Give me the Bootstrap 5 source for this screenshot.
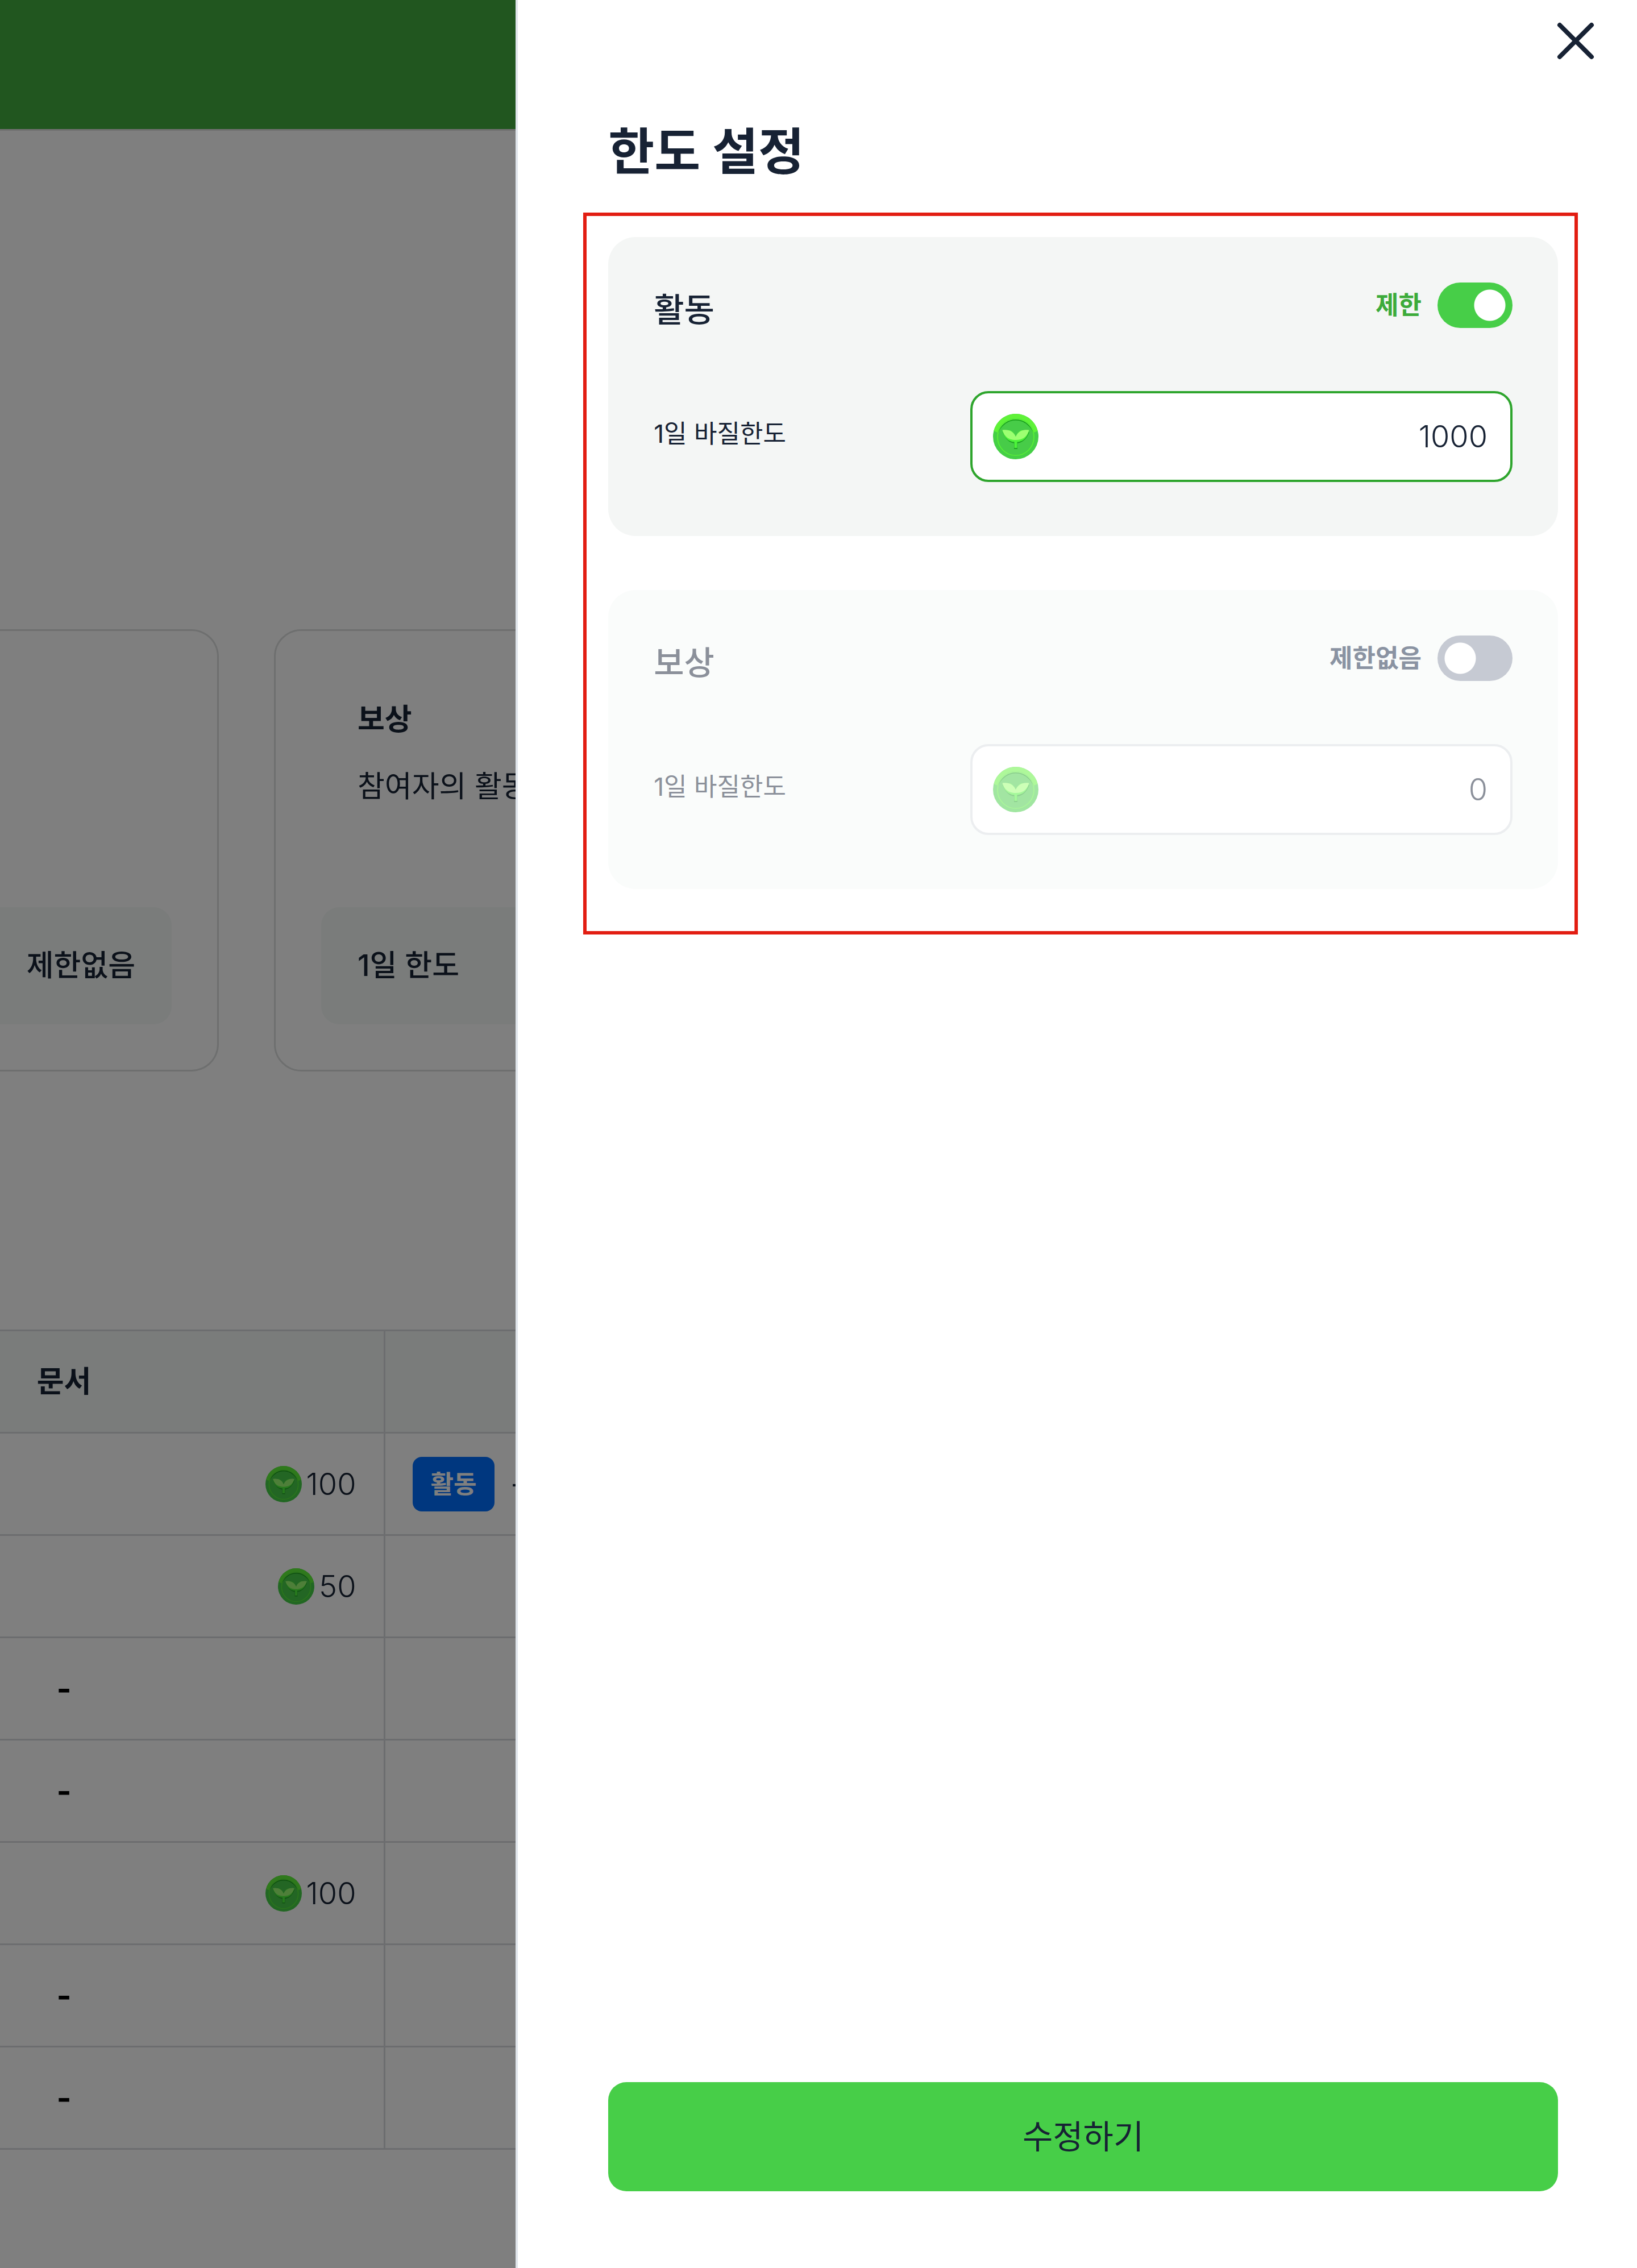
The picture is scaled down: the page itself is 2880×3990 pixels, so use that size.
<!DOCTYPE html>
<html lang="ko">
<head>
<meta charset="utf-8">
<meta name="viewport" content="width=device-width, initial-scale=1">
<title>한도 설정</title>
<link href="https://cdn.jsdelivr.net/npm/bootstrap@5.3.0/dist/css/bootstrap.min.css" rel="stylesheet">
<style>
  :root {
    --ink: #172234;
    --brand: #47ce48;
    --brand-deep: #2ea52d;
    --soft: #f4f6f5;
    --soft-page: #f4f9f7;
    --line: #d8dadf;
  }
  body {
    font-family: Inter, "Noto Sans CJK KR", sans-serif;
    font-size: 52px;
    line-height: 80px;
    color: var(--ink);
    min-height: 100vh;
    overflow-x: hidden;
  }
  .topbar { height: 230px; background: #42ac3e; border-bottom: 3px solid #e0e0e0; }
  .page-main { padding-top: 877px; }

  /* limit summary cards */
  .summary-row { gap: 97px; }
  .summary-card { border: 3px solid #dcdfdf; border-radius: 48px; padding: 80px; }
  .summary-card.first { width: 385px; border-left: 0; border-radius: 0 48px 48px 0; padding-left: 0; }
  .summary-head { padding: 36px 64px 172px; }
  .summary-head h2 { font-size: 52px; line-height: 80px; margin-bottom: 38px; }
  .summary-limit { background: var(--soft-page); border-radius: 32px; padding: 63px 64px; line-height: 80px; font-weight: 500; }
  .summary-card.first .summary-limit { border-radius: 0 32px 32px 0; padding-left: 0; }

  /* reward table */
  .reward-table { margin-top: 454px; table-layout: fixed; color: var(--ink); --bs-table-color: var(--ink); }
  .reward-table tr { height: 180px; }
  .reward-table th, .reward-table td { padding: 0; border: 0 solid var(--line); border-width: 3px 0; }
  .reward-table thead th { background: var(--soft-page); vertical-align: middle; }
  .reward-table .split { border-left-width: 3px; padding-left: 48px; }
  .reward-table .amount { padding-right: 48px; font-size: 54px; font-weight: 300; }
  .col-name { width: 225px; }
  .col-amount { width: 451px; }
  .dash { color: #000; font-size: 56px; }
  .coin-sm { width: 64px; height: 64px; }
  .tag { background: #006fff; font-size: 44px; line-height: 64px; padding: 16px 32px; border-radius: 16px; }

  /* settings drawer */
  .offcanvas.limit-drawer { --bs-offcanvas-width: 68.5vw; border-left: 4px solid #dfe4ea; color: var(--ink); transition: none; outline: 0; }
  .drawer-head { height: 144px; padding-right: 72px; }
  .drawer-close svg { width: 72px; height: 72px; }
  .drawer-title { font-size: 88px; line-height: 120px; padding: 62px 0 48px 159px; }
  .limit-frame { border: 6px solid #e21d12; margin: 0 104px 0 115px; padding: 37px 29px 74px 38px; gap: 95px; }
  .limit-box { background: var(--soft); border-radius: 48px; padding: 80px 80px 95px; }
  .limit-head { margin-bottom: 95px; }
  .limit-head h3 { font-size: 58px; line-height: 96px; }
  .limit-switch { gap: 28px; font-size: 44px; line-height: 80px; color: #3cab3a; }
  .limit-switch .form-check-input {
    appearance: none; width: 132px; height: 80px; margin: 0; border: 0; border-radius: 40px; box-shadow: none;
    background: radial-gradient(circle closest-side at 40px 40px, #fff 27px, #c6cad3 28px); transition: none;
  }
  .limit-switch .form-check-input:checked {
    background: radial-gradient(circle closest-side at 92px 40px, #fff 27px, var(--brand) 28px);
  }
  .limit-name { font-size: 44px; line-height: 150px; }
  .limit-input { width: 954px; height: 160px; border: 4px solid var(--brand-deep); border-radius: 32px; background: #fff; padding: 0 40px 0 36px; }
  .limit-input svg { width: 80px; height: 80px; }
  .limit-input .form-control { font-size: 54px; font-weight: 300; line-height: 80px; color: var(--ink); box-shadow: none; background: none; }
  .limit-box.is-off { background: #fafcfb; color: #8b909a; }
  .limit-box.is-off .limit-switch { color: #8a93a2; }
  .limit-box.is-off .limit-input { border-color: #eceef0; }
  .limit-box.is-off .limit-input svg { opacity: .5; }
  .limit-box.is-off .form-control { color: #8b909a; }
  .drawer-foot { padding: 0 139px 135px 159px; }
  .btn-save, .btn-save:hover { background: var(--brand); color: var(--ink); font-size: 58px; line-height: 80px; padding: 56px; border: 0; border-radius: 32px; }
</style>
<script src="https://cdn.jsdelivr.net/npm/bootstrap@5.3.0/dist/js/bootstrap.bundle.min.js"></script>
</head>
<body>

<svg class="d-none" aria-hidden="true">
  <symbol id="coin" viewBox="0 0 80 80">
    <circle cx="40" cy="40" r="40" fill="#45cf46"/>
    <path d="M1.300 30A40 40 0 0 1 78.700 30L72 33A33 33 0 0 0 8 33Z" fill="#5ff238"/>
    <circle cx="40" cy="41" r="32" fill="none" stroke="#58ec38" stroke-width="2"/>
    <path d="M9 34A32 32 0 0 1 71 34A32.500 30 0 0 0 9 34Z" fill="#169a1a"/>
    <circle cx="40" cy="42" r="30.500" fill="#47cc48"/>
    <path d="M17 32C22 46 30 51 37 52V62H43V52C50 51 59 46 64 32Z" fill="#1fa324"/>
    <path d="M16.500 29C20 43 28 49 37.500 49.500V60H42.500V49.500C52 49 60 43 63.500 29Z" fill="#4df33a"/>
    <path d="M16.500 28.500C28 27 36 31 40 40C44 31 52 27 63.500 28.500C60 40 53 46 40 46C27 46 20 40 16.500 28.500Z" fill="#9dff72"/>
    <path d="M17.500 28C28 26 36 30 40 40C44 30 52 26 62.500 28L60 20H20Z" fill="#47cc48"/>
  </symbol>
</svg>

<header class="topbar"></header>

<main class="page-main">
  <section class="summary-row d-flex">
    <article class="summary-card first d-flex flex-column">
      <div class="summary-limit mt-auto text-end">제한없음</div>
    </article>
    <article class="summary-card flex-grow-1">
      <div class="summary-head">
        <h2 class="fw-bold">보상</h2>
        <p class="mb-0 text-nowrap">참여자의 활동</p>
      </div>
      <div class="summary-limit">1일 한도</div>
    </article>
  </section>

  <table class="reward-table table align-middle mb-0">
    <colgroup><col class="col-name"><col class="col-amount"><col></colgroup>
    <thead>
      <tr><th class="text-center">문서</th><th></th><th class="split"></th></tr>
    </thead>
    <tbody>
      <tr>
        <td></td>
        <td class="amount"><div class="d-flex justify-content-end align-items-center gap-2"><svg class="coin-sm"><use href="#coin"/></svg>100</div></td>
        <td class="split"><div class="d-flex align-items-center"><span class="tag text-white fw-bold me-4">활동</span><span class="ms-1">-</span></div></td>
      </tr>
      <tr>
        <td></td>
        <td class="amount"><div class="d-flex justify-content-end align-items-center gap-2"><svg class="coin-sm"><use href="#coin"/></svg>50</div></td>
        <td class="split"></td>
      </tr>
      <tr><td class="dash text-center fw-bold">-</td><td></td><td class="split"></td></tr>
      <tr><td class="dash text-center fw-bold">-</td><td></td><td class="split"></td></tr>
      <tr>
        <td></td>
        <td class="amount"><div class="d-flex justify-content-end align-items-center gap-2"><svg class="coin-sm"><use href="#coin"/></svg>100</div></td>
        <td class="split"></td>
      </tr>
      <tr><td class="dash text-center fw-bold">-</td><td></td><td class="split"></td></tr>
      <tr><td class="dash text-center fw-bold">-</td><td></td><td class="split"></td></tr>
    </tbody>
  </table>
</main>

<div class="offcanvas-backdrop show"></div>

<aside class="offcanvas offcanvas-end limit-drawer show" data-bs-backdrop="false" data-bs-scroll="true" tabindex="-1" aria-labelledby="drawerTitle">
  <div class="drawer-head d-flex justify-content-end align-items-center">
    <button type="button" class="drawer-close btn p-0 border-0 d-flex" aria-label="닫기">
      <svg viewBox="0 0 72 72" fill="none" stroke="#172234" stroke-width="8" stroke-linecap="round"><path d="M8 8L64 64M64 8L8 64"/></svg>
    </button>
  </div>
  <h1 class="drawer-title fw-bold mb-0" id="drawerTitle">한도 설정</h1>

  <form class="d-flex flex-column flex-grow-1">
    <div class="limit-frame d-flex flex-column">
      <section class="limit-box">
        <div class="limit-head d-flex justify-content-between align-items-start">
          <h3 class="mb-0">활동</h3>
          <div class="limit-switch d-flex fw-bold">
            <label for="activitySwitch">제한</label>
            <input class="form-check-input" type="checkbox" role="switch" id="activitySwitch" checked>
          </div>
        </div>
        <div class="d-flex justify-content-between align-items-start">
          <label class="limit-name" for="activityLimit">1일 바질한도</label>
          <div class="limit-input d-flex align-items-center">
            <svg class="flex-shrink-0"><use href="#coin"/></svg>
            <input class="form-control border-0 p-0 text-end" type="text" inputmode="numeric" id="activityLimit" value="1000">
          </div>
        </div>
      </section>

      <section class="limit-box is-off">
        <div class="limit-head d-flex justify-content-between align-items-start">
          <h3 class="mb-0">보상</h3>
          <div class="limit-switch d-flex fw-bold">
            <label for="rewardSwitch">제한없음</label>
            <input class="form-check-input" type="checkbox" role="switch" id="rewardSwitch">
          </div>
        </div>
        <div class="d-flex justify-content-between align-items-start">
          <label class="limit-name" for="rewardLimit">1일 바질한도</label>
          <div class="limit-input d-flex align-items-center">
            <svg class="flex-shrink-0"><use href="#coin"/></svg>
            <input class="form-control border-0 p-0 text-end" type="text" inputmode="numeric" id="rewardLimit" value="0" readonly>
          </div>
        </div>
      </section>
    </div>

    <div class="drawer-foot mt-auto">
      <button type="submit" class="btn btn-save w-100">수정하기</button>
    </div>
  </form>
</aside>

</body>
</html>
